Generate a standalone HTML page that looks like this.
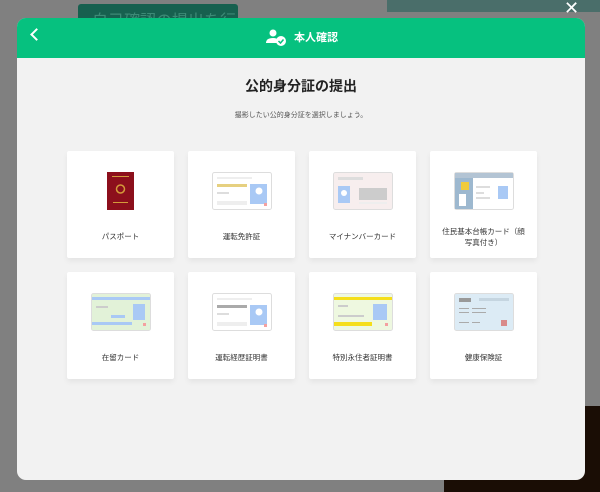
<!DOCTYPE html><html><head><meta charset="utf-8"><style>
*{margin:0;padding:0;box-sizing:border-box}
body{width:600px;height:492px;background:#808080;position:relative;overflow:hidden;font-family:"Liberation Sans","Noto Sans CJK JP",sans-serif}
.bg1{position:absolute;left:78px;top:4px;width:160px;height:20px;background:#17604f;border-radius:3px;color:#3d8a76;font-size:16px;padding:3px 0 0 14px}
.bg2{position:absolute;left:387px;top:0;width:213px;height:12px;background:#4a6e6a}
.bg3{position:absolute;left:444px;top:406px;width:156px;height:86px;background:#1a0d05}
.x{position:absolute;left:564px;top:-2px;color:#fff;font-size:18px}
.modal{position:absolute;left:17px;top:18px;width:568px;height:462px;background:#f2f2f2;border-radius:9px;overflow:hidden}
.hd{height:40px;background:#06c17f;position:relative;color:#fff}
.hd .t{position:absolute;left:256px;top:11px;font-size:11px;font-weight:bold}
.back{position:absolute;left:15px;top:12px;width:9px;height:9px;border-left:2px solid #fff;border-bottom:2px solid #fff;transform:rotate(45deg)}
h1{position:absolute;top:58px;width:100%;text-align:center;font-size:14px;color:#222}
.sub{position:absolute;top:92px;width:100%;text-align:center;font-size:7px;color:#555}
.card{position:absolute;width:107px;height:107px;background:#fff;border-radius:2px;box-shadow:0 3px 6px rgba(0,0,0,.06)}
.card .l{position:absolute;top:80px;width:100%;text-align:center;font-size:7.5px;color:#333;line-height:11px}
.card svg{position:absolute;left:24px;top:21px}
</style></head><body>
<div class="bg1">自己確認の提出を行う</div><div class="bg2"></div><div class="bg3"></div><div class="x">✕</div>
<div class="modal">
<div class="hd"><div class="back"></div>
<svg style="position:absolute;left:248px;top:10px" width="24" height="20" viewBox="0 0 24 20"><circle cx="8" cy="5" r="3.5" fill="#fff"/><path d="M1 15 Q1 10 8 10 Q12 10 13 12 L13 15Z" fill="#fff"/><circle cx="16" cy="13" r="5" fill="#fff"/><path d="M13.5 13 L15.5 15 L18.5 11.5" stroke="#06c17f" stroke-width="1.5" fill="none"/></svg>
<div class="t" style="left:277px">本人確認</div></div>
<h1>公的身分証の提出</h1>
<div class="sub">撮影したい公的身分証を選択しましょう。</div>

<div class="card" style="left:50px;top:133px"><svg width="60" height="40"><rect x="16" y="0" width="27" height="38" fill="#8c0f1c"/><circle cx="29.5" cy="17" r="4" fill="none" stroke="#d49a3a" stroke-width="1.5"/><rect x="21" y="4" width="17" height="1" fill="#d49a3a"/><rect x="22" y="30" width="15" height="1" fill="#d49a3a"/></svg><div class="l">パスポート</div></div>
<div class="card" style="left:171px;top:133px"><svg width="60" height="40"><rect x="0.5" y="0.5" width="59" height="37" rx="2" fill="#fff" stroke="#ddd"/><rect x="5" y="5" width="35" height="2" fill="#eee"/><rect x="5" y="12" width="30" height="3" fill="#e6d080"/><rect x="38" y="12" width="17" height="20" fill="#a9c9f5"/><circle cx="47" cy="19" r="3.5" fill="#fff"/><rect x="5" y="20" width="12" height="2" fill="#ddd"/><rect x="5" y="29" width="30" height="4" fill="#eee"/><rect x="52" y="31" width="3" height="3" fill="#f4a0a0"/></svg><div class="l">運転免許証</div></div>
<div class="card" style="left:292px;top:133px"><svg width="60" height="40"><rect x="0.5" y="0.5" width="59" height="37" rx="2" fill="#f7eeee" stroke="#ddd"/><rect x="5" y="5" width="25" height="3" fill="#ddd"/><rect x="5" y="14" width="12" height="17" fill="#a9c9f5"/><circle cx="11" cy="21" r="3" fill="#fff"/><rect x="26" y="16" width="28" height="12" fill="#ccc"/><rect x="26" y="30" width="28" height="2" fill="#eee"/></svg><div class="l">マイナンバーカード</div></div>
<div class="card" style="left:413px;top:133px"><svg width="60" height="40"><rect x="0.5" y="0.5" width="59" height="37" rx="2" fill="#fff" stroke="#ddd"/><rect x="1" y="1" width="18" height="36" fill="#9db8cf"/><rect x="1" y="1" width="58" height="5" fill="#b3c4d4"/><rect x="7" y="10" width="8" height="8" fill="#f0cb3c"/><rect x="5" y="22" width="7" height="12" fill="#fff"/><rect x="22" y="14" width="14" height="2" fill="#ddd"/><rect x="22" y="20" width="8" height="2" fill="#ddd"/><rect x="22" y="25" width="14" height="2" fill="#ddd"/><rect x="44" y="14" width="10" height="13" fill="#a9c9f5"/></svg><div class="l" style="top:75px">住民基本台帳カード（顔<br>写真付き）</div></div>

<div class="card" style="left:50px;top:254px"><svg width="60" height="40"><rect x="0.5" y="0.5" width="59" height="37" rx="2" fill="#e2f2d8" stroke="#ddd"/><rect x="1" y="4" width="58" height="3" fill="#a9c9f5"/><rect x="1" y="29" width="40" height="3" fill="#a9c9f5"/><rect x="5" y="13" width="12" height="2" fill="#ccc"/><rect x="20" y="22" width="14" height="3" fill="#a9c9f5"/><rect x="42" y="11" width="12" height="16" fill="#a9c9f5"/><rect x="52" y="30" width="3" height="3" fill="#f4a0a0"/></svg><div class="l">在留カード</div></div>
<div class="card" style="left:171px;top:254px"><svg width="60" height="40"><rect x="0.5" y="0.5" width="59" height="37" rx="2" fill="#fff" stroke="#ddd"/><rect x="5" y="5" width="35" height="2" fill="#eee"/><rect x="5" y="12" width="30" height="3" fill="#aaa"/><rect x="38" y="12" width="17" height="20" fill="#a9c9f5"/><circle cx="47" cy="19" r="3.5" fill="#fff"/><rect x="5" y="20" width="12" height="2" fill="#ddd"/><rect x="5" y="29" width="30" height="4" fill="#eee"/><rect x="52" y="31" width="3" height="3" fill="#f4a0a0"/></svg><div class="l">運転経歴証明書</div></div>
<div class="card" style="left:292px;top:254px"><svg width="60" height="40"><rect x="0.5" y="0.5" width="59" height="37" rx="2" fill="#eef8e0" stroke="#ddd"/><rect x="1" y="4" width="58" height="3" fill="#f5de1a"/><rect x="1" y="29" width="38" height="4" fill="#f5de1a"/><rect x="5" y="12" width="10" height="2" fill="#ccc"/><rect x="5" y="22" width="26" height="2" fill="#ccc"/><rect x="40" y="11" width="14" height="16" fill="#a9c9f5"/><rect x="52" y="30" width="3" height="3" fill="#f4a0a0"/></svg><div class="l">特別永住者証明書</div></div>
<div class="card" style="left:413px;top:254px"><svg width="60" height="40"><rect x="0.5" y="0.5" width="59" height="37" rx="2" fill="#dcebf5" stroke="#ddd"/><rect x="5" y="5" width="12" height="4" fill="#999"/><rect x="25" y="5" width="30" height="3" fill="#c5d5e0"/><rect x="5" y="15" width="10" height="1" fill="#aaa"/><rect x="18" y="15" width="14" height="1" fill="#aaa"/><rect x="5" y="19" width="10" height="1" fill="#aaa"/><rect x="18" y="19" width="14" height="1" fill="#aaa"/><rect x="5" y="29" width="10" height="1" fill="#aaa"/><rect x="18" y="29" width="8" height="1" fill="#aaa"/><rect x="47" y="27" width="6" height="6" fill="#d98a8a"/></svg><div class="l">健康保険証</div></div>
</div>
</body></html>
